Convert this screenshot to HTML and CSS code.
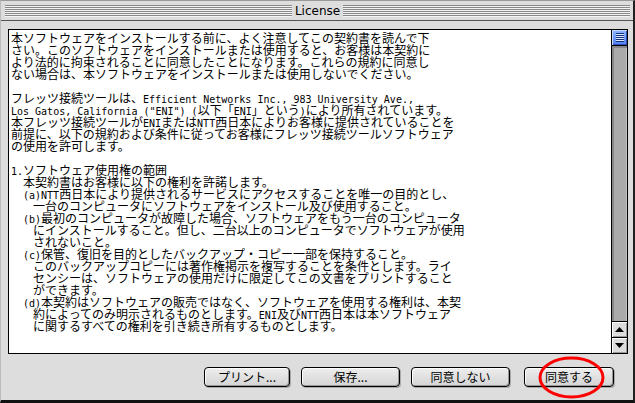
FILE: index.html
```html
<!DOCTYPE html>
<html lang="ja">
<head>
  <meta charset="UTF-8" />
  <title>License</title>
  <link rel="stylesheet" href="styles.css">
</head>
<body>
  <div class="window">
    <div class="titlebar">
      <div class="stripes"></div>
      <div class="title">License</div>
      <div class="stripes"></div>
    </div>

    <div class="content">
      <div class="textbox">
        <div class="doc">
          <div>本ソフトウェアをインストールする前に、よく注意してこの契約書を読んで下</div>
          <div>さい。このソフトウェアをインストールまたは使用すると、お客様は本契約に</div>
          <div>より法的に拘束されることに同意したことになります。これらの規約に同意し</div>
          <div>ない場合は、本ソフトウェアをインストールまたは使用しないでください。</div>
          <div></div>
          <div>フレッツ接続ツールは、<span class="lat">Efficient Networks Inc., 983 University Ave.,</span></div>
          <div><span class="lat">Los Gatos, California ("ENI") (</span>以下「<span class="lat">ENI</span>」という<span class="lat">)</span>により所有されています。</div>
          <div>本フレッツ接続ツールが<span class="lat">ENI</span>または<span class="lat">NTT</span>西日本によりお客様に提供されていることを</div>
          <div>前提に、以下の規約および条件に従ってお客様にフレッツ接続ツールソフトウェア</div>
          <div>の使用を許可します。</div>
          <div></div>
          <div><span class="lat">1.</span>ソフトウェア使用権の範囲</div>
          <div class="in1">本契約書はお客様に以下の権利を許諾します。</div>
          <div class="in1"><span class="lat">(a)NTT</span>西日本により提供されるサービスにアクセスすることを唯一の目的とし、</div>
          <div class="in2">一台のコンピュータにソフトウェアをインストール及び使用すること。</div>
          <div class="in1"><span class="lat">(b)</span>最初のコンピュータが故障した場合、ソフトウェアをもう一台のコンピュータ</div>
          <div class="in2">にインストールすること。但し、二台以上のコンピュータでソフトウェアが使用</div>
          <div class="in2">されないこと。</div>
          <div class="in1"><span class="lat">(c)</span>保管、復旧を目的としたバックアップ・コピー一部を保持すること。</div>
          <div class="in2">このバックアップコピーには著作権掲示を複写することを条件とします。ライ</div>
          <div class="in2">センシーは、ソフトウェアの使用だけに限定してこの文書をプリントすること</div>
          <div class="in2">ができます。</div>
          <div class="in1"><span class="lat">(d)</span>本契約はソフトウェアの販売ではなく、ソフトウェアを使用する権利は、本契</div>
          <div class="in2">約によってのみ明示されるものとします。<span class="lat">ENI</span>及び<span class="lat">NTT</span>西日本は本ソフトウェア</div>
          <div class="in2">に関するすべての権利を引き続き所有するものとします。</div>
        </div>

        <div class="scrollbar">
          <div class="thumb"><div class="grip"></div></div>
          <div class="track"></div>
          <div class="arrow">
            <svg width="9" height="5" viewBox="0 0 9 5"><polygon points="4.5,0 9,5 0,5" fill="#000"/></svg>
          </div>
          <div class="arrow">
            <svg width="9" height="5" viewBox="0 0 9 5"><polygon points="0,0 9,0 4.5,5" fill="#000"/></svg>
          </div>
        </div>
      </div>

      <div class="buttons">
        <button class="btn btn-print">プリント...</button>
        <button class="btn btn-save">保存...</button>
        <button class="btn btn-decline">同意しない</button>
        <button class="btn btn-agree">同意する
          <svg class="circle" width="67" height="43" viewBox="0 0 67 43">
            <ellipse cx="33.5" cy="21.5" rx="31.5" ry="19.5" fill="none" stroke="#ff0000" stroke-width="3"/>
          </svg>
        </button>
      </div>
    </div>
  </div>
</body>
</html>
```

FILE: styles.css
```css
html, body {
  margin: 0;
  padding: 0;
  background-color: #dddddd;
}

.window {
  width: 635px;
  height: 403px;
  box-sizing: border-box;
  background-color: #dddddd;
  border-top: 1px solid #999;
  border-left: 1px solid #bbb;
  border-right: 2px solid #222;
  border-bottom: 3px solid #111;
  display: flex;
  flex-direction: column;
}

/* title bar */
.titlebar {
  height: 19px;
  padding: 0 3px 0 4px;
  display: flex;
  align-items: center;
  border-bottom: 1px solid #555;
  background-color: #dddddd;
}

.stripes {
  flex: 1;
  height: 12px;
  background: repeating-linear-gradient(to bottom, #888 0, #888 1px, #f4f4f4 1px, #f4f4f4 2px);
}

.title {
  padding: 0 3px 0 3px;
  font-family: "DejaVu Sans", sans-serif;
  font-size: 12px;
  line-height: 14px;
  color: #000;
}

/* content */
.content {
  flex: 1;
  padding: 8px 5px 0 7px;
}

.textbox {
  width: 620px;
  height: 325px;
  box-sizing: border-box;
  border: 1px solid #000;
  background-color: #fff;
  display: flex;
}

.doc {
  flex: 1;
  padding: 2px 2px;
  font-family: "Noto Sans CJK JP", sans-serif;
  font-size: 12px;
  line-height: 12px;
  color: #000;
  white-space: nowrap;
  overflow: hidden;
}

/* each line is one row of 12px, whatever fonts are mixed in it */
.doc > div {
  height: 12px;
}

.doc .lat {
  font-family: "DejaVu Sans Mono", monospace;
  font-size: 10px;
  line-height: 10px;
}

.in1 {
  padding-left: 12px;
}

.in2 {
  padding-left: 22px;
}

/* scroll bar */
.scrollbar {
  width: 15px;
  border-left: 1px solid #000;
  display: flex;
  flex-direction: column;
}

.thumb {
  height: 15px;
  border-bottom: 1px solid #000;
  background: linear-gradient(to bottom, #8fb4ff, #4f7fef);
  box-shadow: inset 1px 1px #c4d8ff, inset -1px -1px #2a52b8;
  display: flex;
  align-items: center;
  justify-content: center;
}

.grip {
  width: 8px;
  height: 9px;
  background: repeating-linear-gradient(to bottom, #13327a 0, #13327a 1px, #d8e6ff 1px, #d8e6ff 2px);
}

.track {
  flex: 1;
  background-color: #aaaaaa;
  box-shadow: inset 2px 2px #888, inset -1px 0 #c4c4c4;
}

.arrow {
  height: 15px;
  border-top: 1px solid #000;
  background-color: #dddddd;
  box-shadow: inset 1px 1px #fff, inset -1px -1px #999;
  display: flex;
  align-items: center;
  justify-content: center;
}

.arrow svg {
  display: block;
}

/* buttons */
.buttons {
  margin-top: 13px;
  padding-left: 196px;
  display: flex;
}

.btn {
  position: relative;
  height: 20px;
  padding: 0;
  margin: 0;
  border: 1px solid #000;
  border-radius: 4px;
  background: linear-gradient(to bottom, #eeeeee, #d4d4d4);
  box-shadow: inset 1px 1px #fff, inset -1px -1px #999, 1px 1px #aaa;
  font-family: "Noto Sans CJK JP", sans-serif;
  font-size: 12px;
  line-height: 16px;
  color: #000;
  cursor: pointer;
}

.btn-print {
  width: 86px;
}

.btn-save {
  width: 99px;
  margin-left: 11px;
}

.btn-decline {
  width: 99px;
  margin-left: 11px;
}

.btn-agree {
  width: 90px;
  margin-left: 14px;
}

.circle {
  position: absolute;
  left: 13px;
  top: -12px;
  overflow: visible;
}
```
